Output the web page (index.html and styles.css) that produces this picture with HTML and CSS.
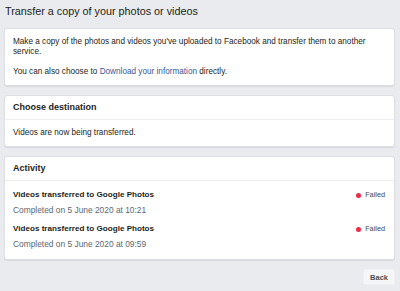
FILE: index.html
```html
<!DOCTYPE html>
<html lang="en">
<head>
  <meta charset="UTF-8">
  <title>Transfer a copy of your photos or videos</title>
  <link rel="stylesheet" href="styles.css">
</head>
<body>
  <div id="page">
    <h1 class="page-title">Transfer a copy of your photos or videos</h1>

    <!-- Intro -->
    <div class="card">
      <div class="card-body">
        <p>Make a copy of the photos and videos you've uploaded to Facebook and transfer them to another service.</p>
        <p>You can also choose to <a href="#">Download your information</a> directly.</p>
      </div>
    </div>

    <!-- Destination -->
    <div class="card">
      <div class="card-header">Choose destination</div>
      <div class="card-body">
        <p>Videos are now being transferred.</p>
      </div>
    </div>

    <!-- Activity -->
    <div class="card">
      <div class="card-header">Activity</div>
      <div class="card-body activity-list">
        <div class="activity-row">
          <div class="activity-info">
            <div class="activity-title">Videos transferred to Google Photos</div>
            <div class="activity-date">Completed on 5 June 2020 at 10:21</div>
          </div>
          <div class="status"><span class="status-dot"></span>Failed</div>
        </div>
        <div class="activity-row">
          <div class="activity-info">
            <div class="activity-title">Videos transferred to Google Photos</div>
            <div class="activity-date">Completed on 5 June 2020 at 09:59</div>
          </div>
          <div class="status"><span class="status-dot"></span>Failed</div>
        </div>
      </div>
    </div>

    <div class="actions">
      <button class="back-button">Back</button>
    </div>
  </div>
</body>
</html>
```

FILE: styles.css
```css
:root {
  --page-bg: #e9ebee;
  --card-border: #dddfe2;
  --text-color: #1c1e21;
  --muted-color: #606770;
  --link-color: #385898;
  --failed-color: #f02849;
}

body {
  margin: 0;
  background: var(--page-bg);
  font-family: "Liberation Sans", Arial, sans-serif;
  color: var(--text-color);
}

#page {
  padding: 4px 5px 0 4px;
}

.page-title {
  margin: 0 0 9px 1px;
  font-size: 10.8px;
  font-weight: normal;
  line-height: 15px;
}

/* Cards */
.card {
  background: #fff;
  border: 1px solid var(--card-border);
  border-radius: 3px;
  box-shadow: 0 1px 1px rgba(0,0,0,0.08);
  margin-bottom: 9px;
}
.card-header {
  padding: 6px 8px;
  font-size: 9px;
  font-weight: bold;
  line-height: 11px;
  border-bottom: 1px solid #ebedf0;
}
.card-body {
  padding: 8px 8px;
  font-size: 8.2px;
  line-height: 10px;
}
.card-body p {
  margin: 0 0 10px;
}
.card-body p:last-child {
  margin-bottom: 0;
}
.card-body a {
  color: var(--link-color);
  text-decoration: none;
}

/* Activity rows */
.activity-list {
  display: flex;
  flex-direction: column;
  gap: 7px;
  padding-bottom: 9px;
}
.activity-row {
  display: flex;
  justify-content: space-between;
  align-items: flex-start;
}
.activity-title {
  font-weight: bold;
  font-size: 8.1px;
  line-height: 12px;
}
.activity-date {
  margin-top: 3px;
  color: var(--muted-color);
  font-size: 8.4px;
  line-height: 12px;
}
.status {
  display: flex;
  align-items: center;
  gap: 4px;
  line-height: 12px;
  font-size: 7.3px;
  color: #444950;
  margin-right: 1px;
}
.status-dot {
  width: 5px;
  height: 5px;
  border-radius: 50%;
  background: var(--failed-color);
}

/* Footer */
.actions {
  display: flex;
  justify-content: flex-end;
}
.back-button {
  background: #f5f6f7;
  border: 1px solid #eef0f2;
  border-radius: 2px;
  color: #4b4f56;
  font-family: inherit;
  font-size: 7.5px;
  font-weight: bold;
  padding: 3px 6px;
  height: 16px;
}
```
